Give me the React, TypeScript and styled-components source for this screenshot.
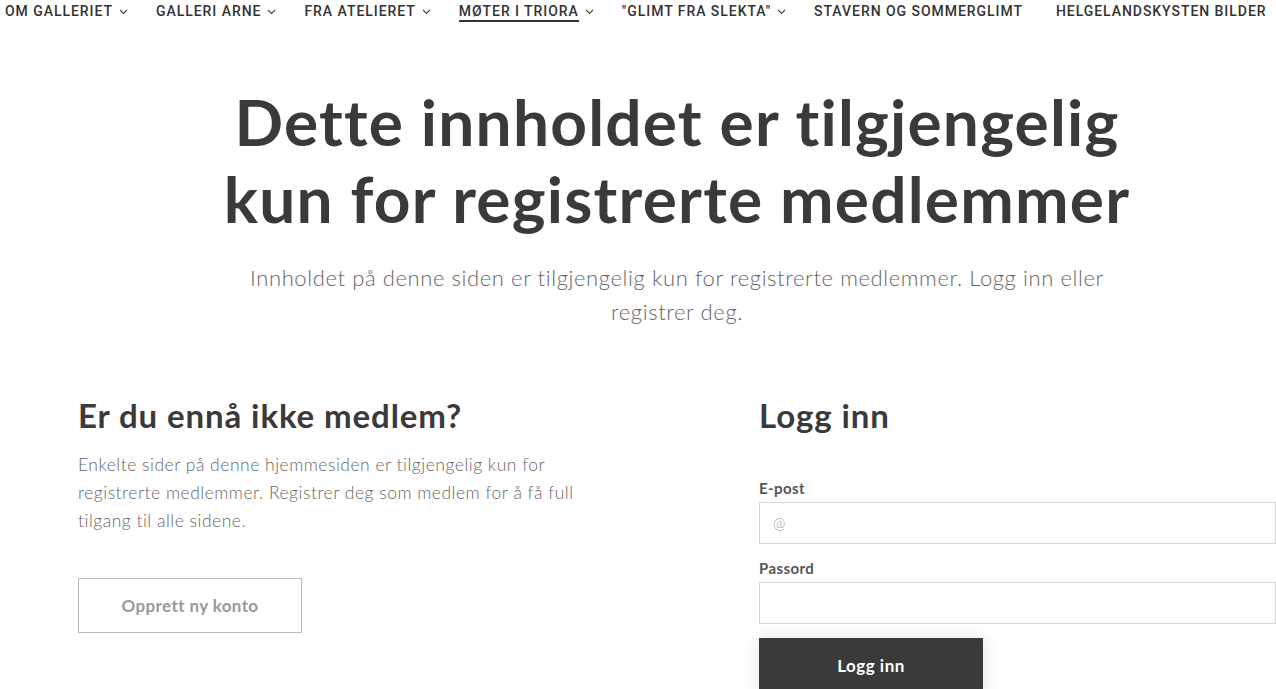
import React from "react";
import styled, { createGlobalStyle } from "styled-components";

const GlobalStyle = createGlobalStyle`
  html, body {
    margin: 0;
    padding: 0;
    background: #ffffff;
    overflow: hidden;
  }
  body {
    font-family: Lato, "Open Sans", sans-serif;
    color: #3a3a3a;
  }
  * { box-sizing: border-box; }
`;

const Page = styled.div`
  width: 1276px;
  height: 689px;
  overflow: hidden;
`;

const Nav = styled.nav`
  display: flex;
  align-items: center;
  gap: 28px;
  height: 23px;
  padding-left: 5px;
  white-space: nowrap;
`;

const NavItem = styled.a<{ $active?: boolean; $plain?: boolean }>`
  display: flex;
  align-items: center;
  gap: 6px;
  padding-right: ${(p) => (p.$plain ? "5px" : "0")};
  font-family: Roboto, "Liberation Sans", sans-serif;
  font-weight: 500;
  font-size: 14px;
  letter-spacing: 0.95px;
  color: #333;
  text-decoration: none;

  span {
    padding-bottom: 1px;
    border-bottom: 2px solid ${(p) => (p.$active ? "#333" : "transparent")};
    margin-top: 2px;
  }
`;

const Chevron = () => (
  <svg width="9" height="6" viewBox="0 0 9 6" fill="none">
    <path d="M1 1l3.5 3.5L8 1" stroke="#444" strokeWidth="1.1" />
  </svg>
);

const Hero = styled.header`
  margin-left: 78px;
  width: 1198px;
  text-align: center;
  padding-top: 60px;
`;

const Title = styled.h1`
  margin: 0;
  font-weight: 700;
  font-size: 64px;
  line-height: 77px;
  color: #3a3a3a;
  letter-spacing: 1.2px;
`;

const Lead = styled.p`
  margin: 24px auto 0;
  max-width: 880px;
  font-weight: 300;
  font-size: 22px;
  line-height: 34px;
  letter-spacing: 0.6px;
  color: #666;
`;

const Columns = styled.section`
  display: grid;
  grid-template-columns: 517px 517px;
  column-gap: 164px;
  margin-left: 78px;
  margin-top: 64px;
`;

const Column = styled.div`
  display: flex;
  flex-direction: column;
  align-items: flex-start;
`;

const SubTitle = styled.h2`
  margin: 0;
  font-weight: 700;
  font-size: 33px;
  line-height: 44px;
  letter-spacing: 0.9px;
  color: #3a3a3a;
`;

const Text = styled.p`
  margin: 14px 0 0;
  font-weight: 300;
  font-size: 17.5px;
  line-height: 28px;
  letter-spacing: 0.5px;
  color: #666;
  max-width: 515px;
`;

const OutlineButton = styled.button`
  margin-top: 43px;
  width: 224px;
  height: 55px;
  background: #fff;
  border: 1px solid #bbb;
  font-family: Lato, "Open Sans", sans-serif;
  font-weight: 700;
  font-size: 17px;
  letter-spacing: 0.4px;
  color: #999;
`;

const Form = styled.form`
  margin-top: 41px;
  width: 100%;
  display: flex;
  flex-direction: column;
`;

const Label = styled.label`
  font-weight: 700;
  font-size: 15px;
  line-height: 20px;
  letter-spacing: 0.4px;
  color: #555;
  margin-bottom: 4px;
`;

const Input = styled.input`
  width: 100%;
  height: 42px;
  border: 1px solid #d6d6d6;
  padding: 0 13px;
  font-family: Lato, "Open Sans", sans-serif;
  font-weight: 300;
  font-size: 15px;
  color: #555;
  margin-bottom: 14px;
  outline: none;

  &::placeholder {
    color: #999;
  }
`;

const SolidButton = styled.button`
  width: 224px;
  height: 55px;
  background: #3a3a3a;
  border: none;
  color: #fff;
  font-family: Lato, "Open Sans", sans-serif;
  font-weight: 700;
  font-size: 17px;
  letter-spacing: 0.5px;
  box-shadow: 0 0 18px rgba(0, 0, 0, 0.12);
`;

const navItems = [
  { label: "OM GALLERIET", menu: true },
  { label: "GALLERI ARNE", menu: true },
  { label: "FRA ATELIERET", menu: true },
  { label: "MØTER I TRIORA", menu: true, active: true },
  { label: "\"GLIMT FRA SLEKTA\"", menu: true },
  { label: "STAVERN OG SOMMERGLIMT", menu: false },
  { label: "HELGELANDSKYSTEN BILDER", menu: false },
];

export default function App() {
  return (
    <Page>
      <GlobalStyle />
      <Nav>
        {navItems.map((item) => (
          <NavItem key={item.label} $active={item.active} $plain={!item.menu}>
            <span>{item.label}</span>
            {item.menu && <Chevron />}
          </NavItem>
        ))}
      </Nav>
      <Hero>
        <Title>
          Dette innholdet er tilgjengelig
          <br />
          kun for registrerte medlemmer
        </Title>
        <Lead>
          Innholdet på denne siden er tilgjengelig kun for registrerte medlemmer. Logg inn eller
          <br />
          registrer deg.
        </Lead>
      </Hero>
      <Columns>
        <Column>
          <SubTitle>Er du ennå ikke medlem?</SubTitle>
          <Text>
            Enkelte sider på denne hjemmesiden er tilgjengelig kun for registrerte medlemmer. Registrer deg
            som medlem for å få full tilgang til alle sidene.
          </Text>
          <OutlineButton type="button">Opprett ny konto</OutlineButton>
        </Column>
        <Column>
          <SubTitle>Logg inn</SubTitle>
          <Form onSubmit={(e) => e.preventDefault()}>
            <Label htmlFor="email">E-post</Label>
            <Input id="email" type="email" placeholder="@" />
            <Label htmlFor="password">Passord</Label>
            <Input id="password" type="password" />
            <SolidButton type="submit">Logg inn</SolidButton>
          </Form>
        </Column>
      </Columns>
    </Page>
  );
}
